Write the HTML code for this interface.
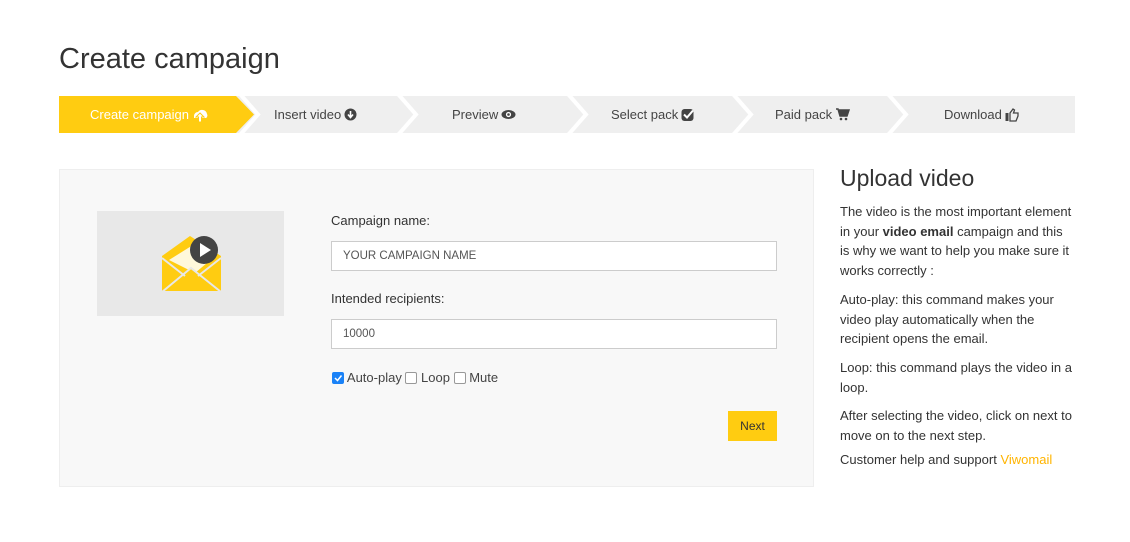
<!DOCTYPE html>
<html><head><meta charset="utf-8"><style>
*{margin:0;padding:0;box-sizing:border-box}
body{width:1130px;height:542px;background:#fff;font-family:"Liberation Sans",sans-serif;color:#444;position:relative;overflow:hidden}
.abs{position:absolute}
h1{position:absolute;left:59px;top:43px;font-size:29px;font-weight:normal;color:#333}
.tab{position:absolute;top:107px;font-size:13px;color:#444;white-space:nowrap;display:flex;align-items:center;gap:3px}
.tab svg{display:block}
.panel{position:absolute;left:59px;top:169px;width:755px;height:318px;background:#f8f8f8;border:1px solid #eee}
.lbl{position:absolute;font-size:13px;color:#333}
.inp{position:absolute;left:331px;width:446px;height:30px;background:#fff;border:1px solid #ccc;font-size:11.5px;padding:8px 11px;color:#555}
.side{position:absolute;left:840px;top:202px;width:234px;font-size:13px;line-height:19.7px;color:#333}
.side p{margin-bottom:9px}
.cb{display:inline-block;width:12px;height:12px;border:1px solid #999;border-radius:2px;vertical-align:-2px;background:#fff}
</style></head><body>
<h1>Create campaign</h1>
<svg class="abs" style="left:0;top:0" width="1130" height="140">
<rect x="59" y="96" width="1016" height="37" fill="#efefef"/>
<polygon points="59,96 236,96 254,114.5 236,133 59,133" fill="#ffcc11"/>
<g fill="none" stroke="#fff" stroke-width="4">
<polyline points="240,94 258,114.5 240,135"/>
<polyline points="398,94 416,114.5 398,135"/>
<polyline points="568,94 586,114.5 568,135"/>
<polyline points="733,94 751,114.5 733,135"/>
<polyline points="888,94 906,114.5 888,135"/>
</g>
</svg>
<div class="tab" style="left:90px;color:#fff">Create campaign <svg width="16" height="14"><path d="M2 8a4 4 0 0 1 4-4a5 5 0 0 1 9 2a3 3 0 0 1-1 4H2z" fill="#fff"/><path d="M8 5l-4 4h2.5v5h3V9H12z" fill="#fff" stroke="#ffcc11" stroke-width="1"/></svg></div>
<div class="tab" style="left:274px">Insert video <svg width="13" height="13"><circle cx="6.5" cy="6.5" r="6" fill="#444"/><path d="M6.5 3v6M4 6.5l2.5 3 2.5-3" stroke="#fff" stroke-width="1.6" fill="none"/></svg></div>
<div class="tab" style="left:452px">Preview <svg width="15" height="11"><ellipse cx="7.5" cy="5.5" rx="7" ry="4.5" fill="#444"/><circle cx="7.5" cy="5.5" r="2.6" fill="#fff"/><circle cx="7.5" cy="5.5" r="1.3" fill="#444"/></svg></div>
<div class="tab" style="left:611px">Select pack <svg width="14" height="13"><rect x="0.5" y="1" width="12" height="12" rx="3" fill="#444"/><path d="M3 6.5l3 3 6-7" stroke="#fff" stroke-width="2" fill="none"/></svg></div>
<div class="tab" style="left:775px">Paid pack <svg width="15" height="13"><path d="M1 1h2l2 7h7l2-6H4" fill="#444" stroke="#444" stroke-width="1.5"/><circle cx="6" cy="11" r="1.3" fill="#444"/><circle cx="11" cy="11" r="1.3" fill="#444"/></svg></div>
<div class="tab" style="left:944px">Download <svg width="15" height="14"><rect x="0.5" y="5" width="3" height="8" fill="#444"/><path d="M5 5l3-4 1.5 1-1 3h4.5v3l-2 5H5z" fill="none" stroke="#444" stroke-width="1.3"/></svg></div>
<div class="panel"></div>
<div class="abs" style="left:97px;top:211px;width:187px;height:105px;background:#e8e8e8"></div>
<svg class="abs" style="left:155px;top:230px" width="75" height="70">
<path d="M7 26L35 6 66 26V62H7z" fill="#ffcc11"/>
<path d="M14 30L38 15 58 28 40 43z" fill="#fff" opacity="0.85"/>
<path d="M7 62L36 38 66 62z" fill="#ffcc11" stroke="#e8e8e8" stroke-width="2"/>
<path d="M7 28L30 46M66 28L43 46" stroke="#e8e8e8" stroke-width="2"/>
<circle cx="49" cy="20" r="14" fill="#444"/><path d="M45 13l11 7-11 7z" fill="#fff"/>
</svg>
<div class="lbl" style="left:331px;top:213px">Campaign name:</div>
<div class="inp" style="top:241px">YOUR CAMPAIGN NAME</div>
<div class="lbl" style="left:331px;top:291px">Intended recipients:</div>
<div class="inp" style="top:319px">10000</div>
<div class="lbl" style="left:332px;top:370px;color:#444"><span class="cb" style="background:#1a82f7;border-color:#1a82f7;position:relative"><svg width="10" height="10" style="position:absolute;left:0;top:0"><path d="M2 5l2.5 2.5 4-5" stroke="#fff" stroke-width="1.5" fill="none"/></svg></span> Auto-play <span class="cb"></span> Loop <span class="cb"></span> Mute</div>
<div class="abs" style="left:728px;top:411px;width:49px;height:30px;background:#ffcc11;font-size:12px;color:#333;text-align:center;line-height:30px">Next</div>
<div class="abs" style="left:840px;top:165px;font-size:23px;color:#333">Upload video</div>
<div class="side">
<p>The video is the most important element in your <b>video email</b> campaign and this is why we want to help you make sure it works correctly :</p>
<p>Auto-play: this command makes your video play automatically when the recipient opens the email.</p>
<p>Loop: this command plays the video in a loop.</p>
<p style="margin-bottom:4px">After selecting the video, click on next to move on to the next step.</p>
<p>Customer help and support <span style="color:#ffb400">Viwomail</span></p>
</div>
</body></html>
